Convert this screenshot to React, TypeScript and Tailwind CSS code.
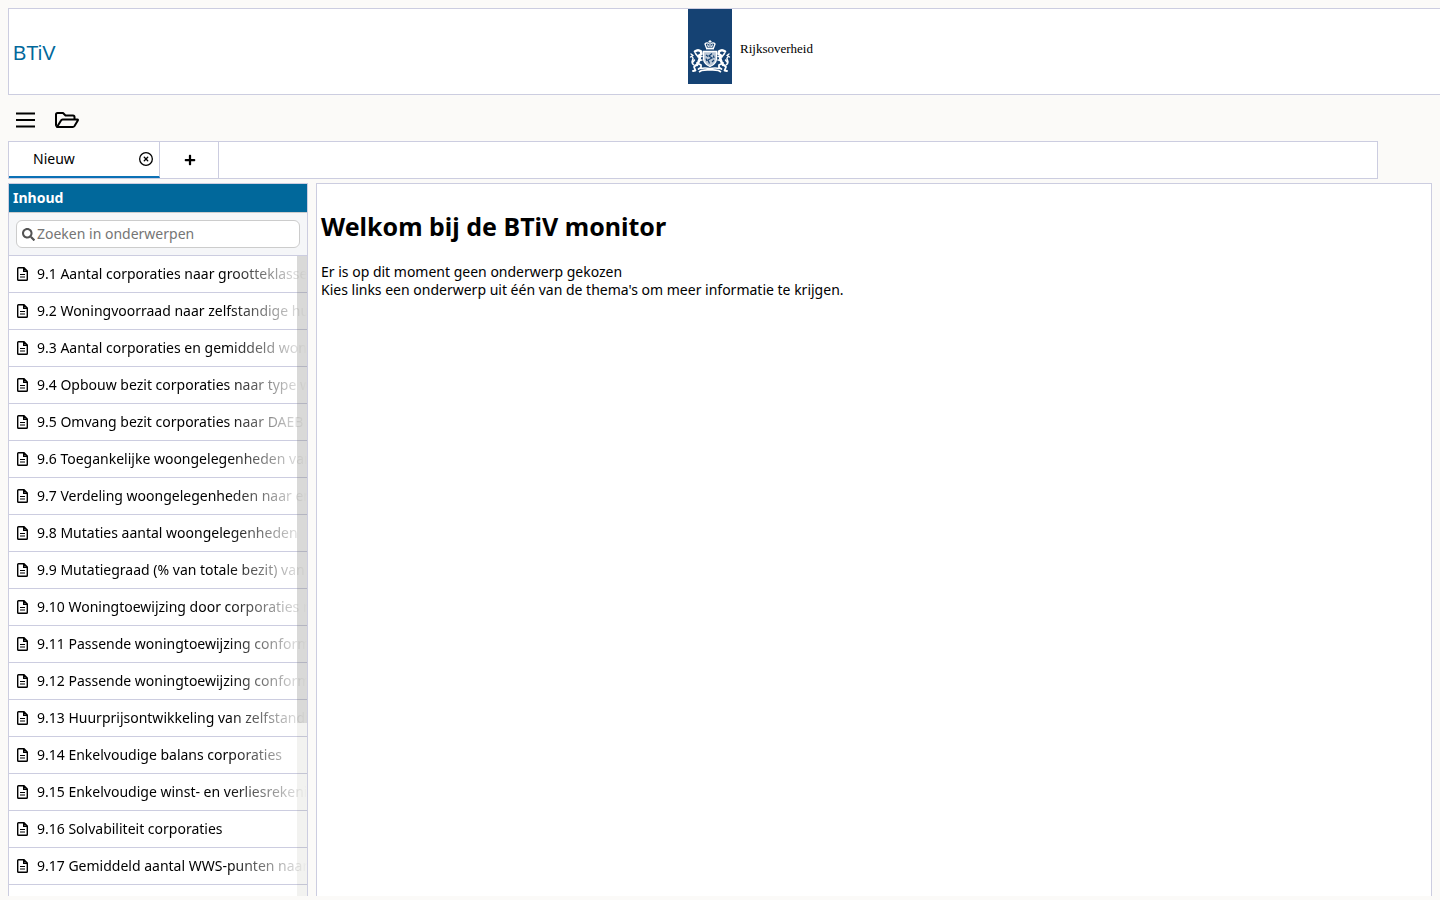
import React from "react";
import { FaPlus, FaSearch } from "react-icons/fa";
import { FaRegCircleXmark } from "react-icons/fa6";

const topics: string[] = [
  "9.1 Aantal corporaties naar grootteklasse",
  "9.2 Woningvoorraad naar zelfstandige huur",
  "9.3 Aantal corporaties en gemiddeld woning",
  "9.4 Opbouw bezit corporaties naar type woning",
  "9.5 Omvang bezit corporaties naar DAEB en",
  "9.6 Toegankelijke woongelegenheden van",
  "9.7 Verdeling woongelegenheden naar energie",
  "9.8 Mutaties aantal woongelegenheden",
  "9.9 Mutatiegraad (% van totale bezit) van",
  "9.10 Woningtoewijzing door corporaties naar",
  "9.11 Passende woningtoewijzing conform",
  "9.12 Passende woningtoewijzing conform",
  "9.13 Huurprijsontwikkeling van zelfstandige",
  "9.14 Enkelvoudige balans corporaties",
  "9.15 Enkelvoudige winst- en verliesrekening",
  "9.16 Solvabiliteit corporaties",
  "9.17 Gemiddeld aantal WWS-punten naar",
  "9.18",
];

function Lion() {
  return (
    <g fill="none" stroke="#fff" strokeLinecap="round" strokeLinejoin="round">
      <path d="M7 13.500 Q10 11 13 13.500 L13.500 16 L11 17.500 Q12.500 20 11 23 L9 27" strokeWidth="2.6" />
      <path d="M7.500 15.500 L9.500 18 M10 19 L14 18.500 M10.500 22.500 L14 22" strokeWidth="1.6" />
      <path d="M9 25 L13 27 L13 29.500 L10.500 31 M8 27 L6 29 L7.500 32.500 L5 33" strokeWidth="1.8" />
      <path d="M6 27 Q3 25 4.500 22 Q6 20 3.500 18.500 M3 16 L5 17.500 L2.500 19 M6.500 22 L5 24" strokeWidth="1.4" />
    </g>
  );
}

function CoatOfArms() {
  return (
    <svg viewBox="0 0 44 36" className="h-9 w-11" aria-hidden="true">
      <Lion />
      <g transform="translate(44 0) scale(-1 1)">
        <Lion />
      </g>
      <g fill="none" stroke="#fff">
        <path d="M18.500 10 L17 6 Q18.500 4 21 5.500 M25.500 10 L27 6 Q25.500 4 23 5.500" strokeWidth="1.3" />
        <path d="M22 2 V9 M20.500 3.500 H23.500 M19.500 6.500 L20.500 9 M24.500 6.500 L23.500 9" strokeWidth="1.1" />
        <path d="M18 10.500 H26" strokeWidth="1.8" />
        <path
          d="M15.500 13.500 H28.500 V21 Q28 26 22 28.500 Q16 26 15.500 21 Z"
          strokeWidth="1.3"
          fill="#b9c6d6"
        />
      </g>
      <path
        d="M18 17 L20 18.500 M24 15.500 L21 18 L24 20 L20 22 L21.500 25.500 M25.500 17.500 L26 20 M18 20.500 L19 23 M24 24 L26 22"
        fill="none"
        stroke="#154273"
        strokeWidth="1.2"
      />
      <path
        d="M12 30.500 Q17 29.500 22 30.500 Q27 29.500 32 30.500 M11 34 L13.500 32.500 Q18 31.500 22 32 Q26 31.500 30.500 32.500 L33 34"
        fill="none"
        stroke="#fff"
        strokeWidth="1.7"
      />
    </svg>
  );
}

function DocumentIcon() {
  return (
    <svg viewBox="0 0 11 14" className="h-3.5 w-[11px] shrink-0" aria-hidden="true">
      <path
        d="M1.500 0.700 H7 L10.300 4 V12.500 Q10.300 13.300 9.500 13.300 H1.500 Q0.700 13.300 0.700 12.500 V1.500 Q0.700 0.700 1.500 0.700 Z M6.700 1 V4.300 H10"
        fill="none"
        stroke="#000"
        strokeWidth="1.4"
      />
      <path d="M3 7.500 H8 M3 10 H8" stroke="#000" strokeWidth="1.2" />
    </svg>
  );
}

export default function App() {
  return (
    <div className="flex h-screen flex-col overflow-hidden bg-[#fbfaf8] pt-2 pb-1 pl-2 font-['Noto_Sans','Open_Sans',sans-serif] text-sm text-black">
      <header className="grid h-[87px] shrink-0 grid-cols-[1fr_auto_1fr] border border-r-0 border-[#cccde0] bg-white">
        <a
          href="#"
          className="self-center pt-0.5 pl-1 font-['Liberation_Sans',sans-serif] text-xl text-[#01689b]"
        >
          BTiV
        </a>
        <div className="flex items-start pl-[52px]">
          <div className="flex h-[75px] w-11 items-end justify-center bg-[#154273] pb-2.5">
            <CoatOfArms />
          </div>
          <span className="pt-8 pl-2 font-['Liberation_Serif',serif] text-[13px] leading-4">
            Rijksoverheid
          </span>
        </div>
      </header>

      <nav className="flex h-[46px] shrink-0 items-center gap-5 pt-1 pl-2">
        <button type="button" aria-label="Menu">
          <svg viewBox="0 0 19 16" className="h-4 w-[19px]" aria-hidden="true">
            <path d="M0 1.500h19M0 8h19M0 14.500h19" stroke="#000" strokeWidth="2" />
          </svg>
        </button>
        <button type="button" aria-label="Openen">
          <svg viewBox="0 0 24 16" className="h-4 w-6" aria-hidden="true">
            <path
              d="M1.500 14 Q1 13.800 1 13 V2.500 Q1 1 2.500 1 H8 L10.500 3.500 H18 Q19.500 3.500 19.500 5 V7.500 M2 15 L6 8.500 Q6.500 7.500 7.500 7.500 H22.500 Q23.300 7.500 22.800 8.500 L19.500 14 Q18.800 15 17.800 15 Z"
              fill="none"
              stroke="#000"
              strokeWidth="2"
              strokeLinejoin="round"
            />
          </svg>
        </button>
      </nav>

      <div className="mr-[62px] flex h-[38px] shrink-0 border border-[#cccde0] bg-white">
        <div className="flex w-[151px] items-center justify-between border-r border-b-2 border-r-[#cccde0] border-b-[#0b71b5] pr-1.5 pl-6">
          <button type="button">Nieuw</button>
          <button type="button" aria-label="Tabblad sluiten">
            <FaRegCircleXmark className="size-3.5" />
          </button>
        </div>
        <button
          type="button"
          aria-label="Nieuw tabblad"
          className="flex w-[59px] items-center justify-center border-r border-[#cccde0] pl-0.5"
        >
          <FaPlus className="size-3" />
        </button>
      </div>

      <div className="mt-1 mr-2 flex min-h-0 flex-1 gap-2">
        <aside className="flex w-[300px] shrink-0 flex-col border border-b-0 border-[#cccde0] bg-white">
          <h2 className="flex h-7 shrink-0 items-center bg-[#01689b] pl-1 font-bold text-white">
            Inhoud
          </h2>
          <div className="h-11 shrink-0 border-y border-t-[#cccccc] border-b-[#cccde0] bg-[#f5f6f8] px-[7px] py-[7px]">
            <label className="flex h-7 items-center gap-0.5 rounded-md border border-[#cccccc] bg-white px-[5px]">
              <FaSearch className="size-[13px] shrink-0 text-[#535353]" />
              <input
                type="text"
                aria-label="Zoeken in onderwerpen"
                placeholder="Zoeken in onderwerpen"
                className="min-w-0 flex-1 bg-transparent outline-none placeholder:text-[#757575]"
              />
            </label>
          </div>
          <div className="relative min-h-0 flex-1 overflow-hidden">
            <ul>
              {topics.map((topic) => (
                <li key={topic} className="h-[37px] border-b border-[#cccde0]">
                  <a
                    href="#"
                    className="flex h-full items-center gap-[9px] overflow-hidden pl-2 whitespace-nowrap"
                  >
                    <DocumentIcon />
                    <span className="min-w-0 flex-1 overflow-hidden [mask-image:linear-gradient(to_right,black_70%,transparent)]">
                      {topic}
                    </span>
                  </a>
                </li>
              ))}
            </ul>
            <div className="absolute inset-y-0 right-0 w-2.5 bg-[#7f7f6f]/10">
              <div className="h-[73%] bg-[#777777]/20" />
            </div>
          </div>
        </aside>

        <main className="min-w-0 flex-1 border border-b-0 border-[#cccde0] bg-white px-1 pt-6">
          <h1 className="text-[25px] leading-9 font-bold">Welkom bij de BTiV monitor</h1>
          <p className="pt-[19px] leading-[18px]">
            Er is op dit moment geen onderwerp gekozen
            <br />
            Kies links een onderwerp uit één van de thema's om meer informatie te krijgen.
          </p>
        </main>
      </div>
    </div>
  );
}
